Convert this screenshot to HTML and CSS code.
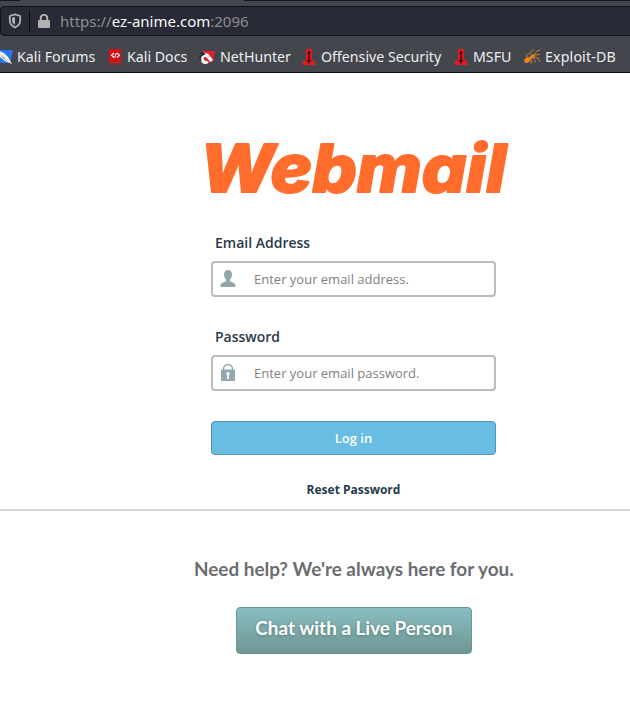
FILE: index.html
```html
<!DOCTYPE html>
<html lang="en">
<head>
<meta charset="utf-8">
<title>Webmail Login</title>
<link rel="stylesheet" href="styles.css">
</head>
<body>
<header class="browser">
  <div class="tabs"><span class="tab-end"></span><span class="tab-rest"></span></div>
  <div class="address">
    <svg class="shield" width="14" height="16" viewBox="0 0 14 16"><path d="M7 1.3 12.2 3v4.4c0 3.2-2.2 5.6-5.2 7.1-3-1.500-5.200-3.900-5.200-7.100V3Z" fill="none" stroke="#b1b1b3" stroke-width="1.8" stroke-linejoin="round"/><path d="M7 4v8c-1.900-1.200-3-2.900-3-4.800V4.800Z" fill="#b1b1b3"/></svg>
    <span class="divider"></span>
    <svg class="lock" width="12" height="14" viewBox="0 0 12 14"><path d="M2.800 6.500V4a3.200 3.200 0 0 1 6.400 0v2.500" fill="none" stroke="#b1b1b3" stroke-width="2"/><rect y="6" width="12" height="8" rx="1.300" fill="#b1b1b3"/></svg>
    <span class="url">https://<b>ez-anime.com</b>:2096</span>
  </div>
  <nav class="bookmarks">
    <a class="forums"><svg width="16" height="16" viewBox="0 0 16 16"><path d="M3 1h13l-3 13H0Z" fill="#2677ef"/><path d="M0 1 7 4l4 4 4 7-7-3-5-4Z" fill="#f8f8f8"/><path d="m2 3 6 5 5 6-7-5Z" fill="#20232a"/><path d="m3 4 9 9" stroke="#fff" stroke-width="1.500"/></svg><span>Kali Forums</span></a>
    <a class="docs"><svg width="14" height="16" viewBox="0 0 14 16"><path d="M2 0h11v13H1V1Z" fill="#d80c14"/><path d="M1 13h12v1.500H1Z" fill="#8d3c40"/><path d="M1 15h12" stroke="#c80b12"/><path d="M6 4 3.500 6.200 6 8.500M9 4l2.500 2.200L9 8.500M8.200 4 6.700 8.500" fill="none" stroke="#fff" stroke-width="1.100"/></svg><span>Kali Docs</span></a>
    <a class="hunter"><svg width="16" height="16" viewBox="0 0 16 16"><path d="M3 2h13l-2 11H7Z" fill="#e51c2d"/><path d="M1 5c3-2 6.500-1.500 9 .700l4 5.300-2.500 2L8 9C6.500 7.500 4.800 8 4.800 9.500S6 12 8 12l2 1-2 2C4 15.500 1 13 1 9Z" fill="#f4f4f4"/><path d="M0 3.500h4l3 1.500-4 2C1.500 9 2 11 3 13 .5 11-.5 8 1.500 5.500Z" fill="#23262b"/></svg><span>NetHunter</span></a>
    <a class="offsec"><svg width="14" height="16" viewBox="0 0 14 16"><path d="M4 0h6v10l3.500 3.500V16H.5v-2.500L4 10Z" fill="#df1b20"/><path d="m7 1.500 1.500 2-.8 1.500v5.500l2 1.500-1.700.8L7 15l-1-2.200-1.700-.8 2-1.500V5l-.8-1.500Z" fill="#340e14"/></svg><span>Offensive Security</span></a>
    <a class="msfu"><svg width="14" height="16" viewBox="0 0 14 16"><path d="M4 0h6v10l3.500 3.500V16H.5v-2.500L4 10Z" fill="#df1b20"/><path d="m7 1.500 1.500 2-.8 1.500v5.500l2 1.500-1.700.8L7 15l-1-2.200-1.700-.8 2-1.500V5l-.8-1.500Z" fill="#340e14"/></svg><span>MSFU</span></a>
    <a class="exploit"><svg width="17" height="16" viewBox="0 0 17 16"><g fill="#ed8622"><ellipse cx="3.500" cy="11" rx="3.500" ry="2.500" transform="rotate(-28 3.500 11)"/><ellipse cx="8.500" cy="7.500" rx="2.800" ry="1.600" transform="rotate(-35 8.500 7.500)"/></g><path d="M5 9 2 7l3-3M8 7 6 4l4-4M10 6l3-4 3-1M10 6l6-.500M9 8l5 1 2 4M8 8l3 3v3M6 9l2 3-1 3" fill="none" stroke="#d78028" stroke-width=".9"/></svg><span>Exploit-DB</span></a>
  </nav>
</header>
<main>
  <h1 class="logo"><svg width="310" height="60" viewBox="0 0 310 60"><text x="-4" y="53" textLength="306" lengthAdjust="spacingAndGlyphs">Webmail</text></svg></h1>
  <form class="login">
    <label for="email">Email Address</label>
    <div class="field">
      <svg width="16" height="17" viewBox="0 0 16 17"><path d="M4 4.500C4 1.500 5.500 0 8 0s4 1.500 4 4.500c0 2-.8 3.600-2 4.800v2c1.500 1 5.500 1.300 5.500 4.200V17H.5v-1.500c0-2.900 4-3.200 5.500-4.200v-2C4.800 8.100 4 6.500 4 4.500Z" fill="#90a7ad"/></svg>
      <input id="email" type="text" placeholder="Enter your email address.">
    </div>
    <label for="password">Password</label>
    <div class="field">
      <svg width="16" height="17" viewBox="0 0 16 17"><path d="M3.500 6V5a4.500 4.500 0 0 1 9 0v1" fill="none" stroke="#90a7ad" stroke-width="1.500"/><rect x="1" y="5.500" width="14" height="11.500" rx=".7" fill="#90a7ad"/><path d="M8 8a1.700 1.700 0 0 1 1 3.100V15H7.200v-3.800A1.700 1.700 0 0 1 8 8Z" fill="#fff"/></svg>
      <input id="password" type="password" placeholder="Enter your email password.">
    </div>
    <button type="button">Log in</button>
    <a class="reset">Reset Password</a>
  </form>
  <section class="help">
    <p>Need help? We're always here for you.</p>
    <a class="chat">Chat with a Live Person</a>
  </section>
</main>
</body>
</html>
```
FILE: styles.css
```css
* { box-sizing: border-box; }
body { margin: 0; height: 702px; overflow: hidden; background: #fff; font-family: "Open Sans", sans-serif; }
.browser { height: 73px; background: #43464d; border-bottom: 1px solid #0e0f12; font: 15px/20px "Noto Sans", sans-serif; color: #eeeeef; overflow: hidden; }
.tabs { height: 6px; display: flex; justify-content: space-between; }
.tabs span { height: 1px; background: #15161a; }
.tab-end { width: 20px; }
.tab-rest { width: 386px; }
.address { height: 30px; margin-right: -5px; padding-left: 7px; display: flex; align-items: center; background: #282a35; border: 1px solid #121318; border-radius: 4px; }
.divider { width: 1px; height: 22px; margin: 0 8px 0 7px; background: #0c0d10; }
.url { margin-left: 10px; color: #8e8e92; white-space: pre; }
.url b { font-weight: 400; color: #f9f9fa; }
.bookmarks { height: 36px; display: flex; align-items: center; padding-top: 5px; font-size: 14.2px; white-space: nowrap; }
.bookmarks a { display: flex; align-items: center; gap: 4px; flex: none; }
.bookmarks svg { flex: none; }
.forums { width: 108px; margin-left: -3px; }
.docs { width: 95px; margin-left: 3px; }
.docs span { margin-left: 1px; }
.hunter { width: 100px; margin-left: -4px; }
.hunter span { margin-left: 1px; }
.offsec { width: 152px; margin-left: 3px; }
.offsec span { margin-left: 1px; }
.msfu { width: 70px; }
.msfu span { margin-left: 1px; }
.exploit span { letter-spacing: .15px; }
main { display: flex; flex-direction: column; }
.logo { width: 310px; height: 60px; margin: 66px 0 0 204px; line-height: 0; }
.logo svg { overflow: visible; }
.logo text { font: italic 800 66px Inter, sans-serif; fill: #ff6c2c; stroke: #ff6c2c; stroke-width: 2px; stroke-linejoin: round; }
.login { width: 285px; margin: 32px 0 0 211px; display: flex; flex-direction: column; color: #293a4a; }
label { padding-left: 4px; font-size: 14px; font-weight: 600; line-height: 24px; }
.field { height: 36px; margin: 6px 0 28px; padding-left: 8px; display: flex; align-items: center; border: 2px solid #bcbcbc; border-radius: 4px; }
.field svg { margin: -1px 0 0 -1px; }
.field input { width: 230px; margin-left: 18px; padding: 0; border: 0; outline: 0; background: none; font: 13px/20px "Open Sans", sans-serif; }
.field input::placeholder { color: #818181; opacity: 1; }
button { height: 34px; margin-top: 2px; padding: 0; background: #69bde5; border: 1px solid #5093b4; border-radius: 4px; color: #fff; font: 600 13px/18px "Open Sans", sans-serif; }
.reset { margin-top: 26px; text-align: center; font-size: 12px; font-weight: 700; line-height: 18px; }
.help { margin-top: 10px; padding: 45px 0 0; border-top: 2px solid #d5d5d5; display: flex; flex-direction: column; }
.help p { width: 322px; margin: 0 0 0 194px; font: 700 18.900px/26px Lato, sans-serif; color: #6c6d70; white-space: nowrap; }
.chat { width: 236px; height: 47px; margin: 25px 0 0 236px; border: 1px solid #6a9695; border-radius: 4px; background: linear-gradient(#89bfc0, #6f9593); color: #fff; text-align: center; font: 700 18.900px/40px Lato, sans-serif; text-shadow: 0 1px 3px #557b7b; white-space: nowrap; }
```
